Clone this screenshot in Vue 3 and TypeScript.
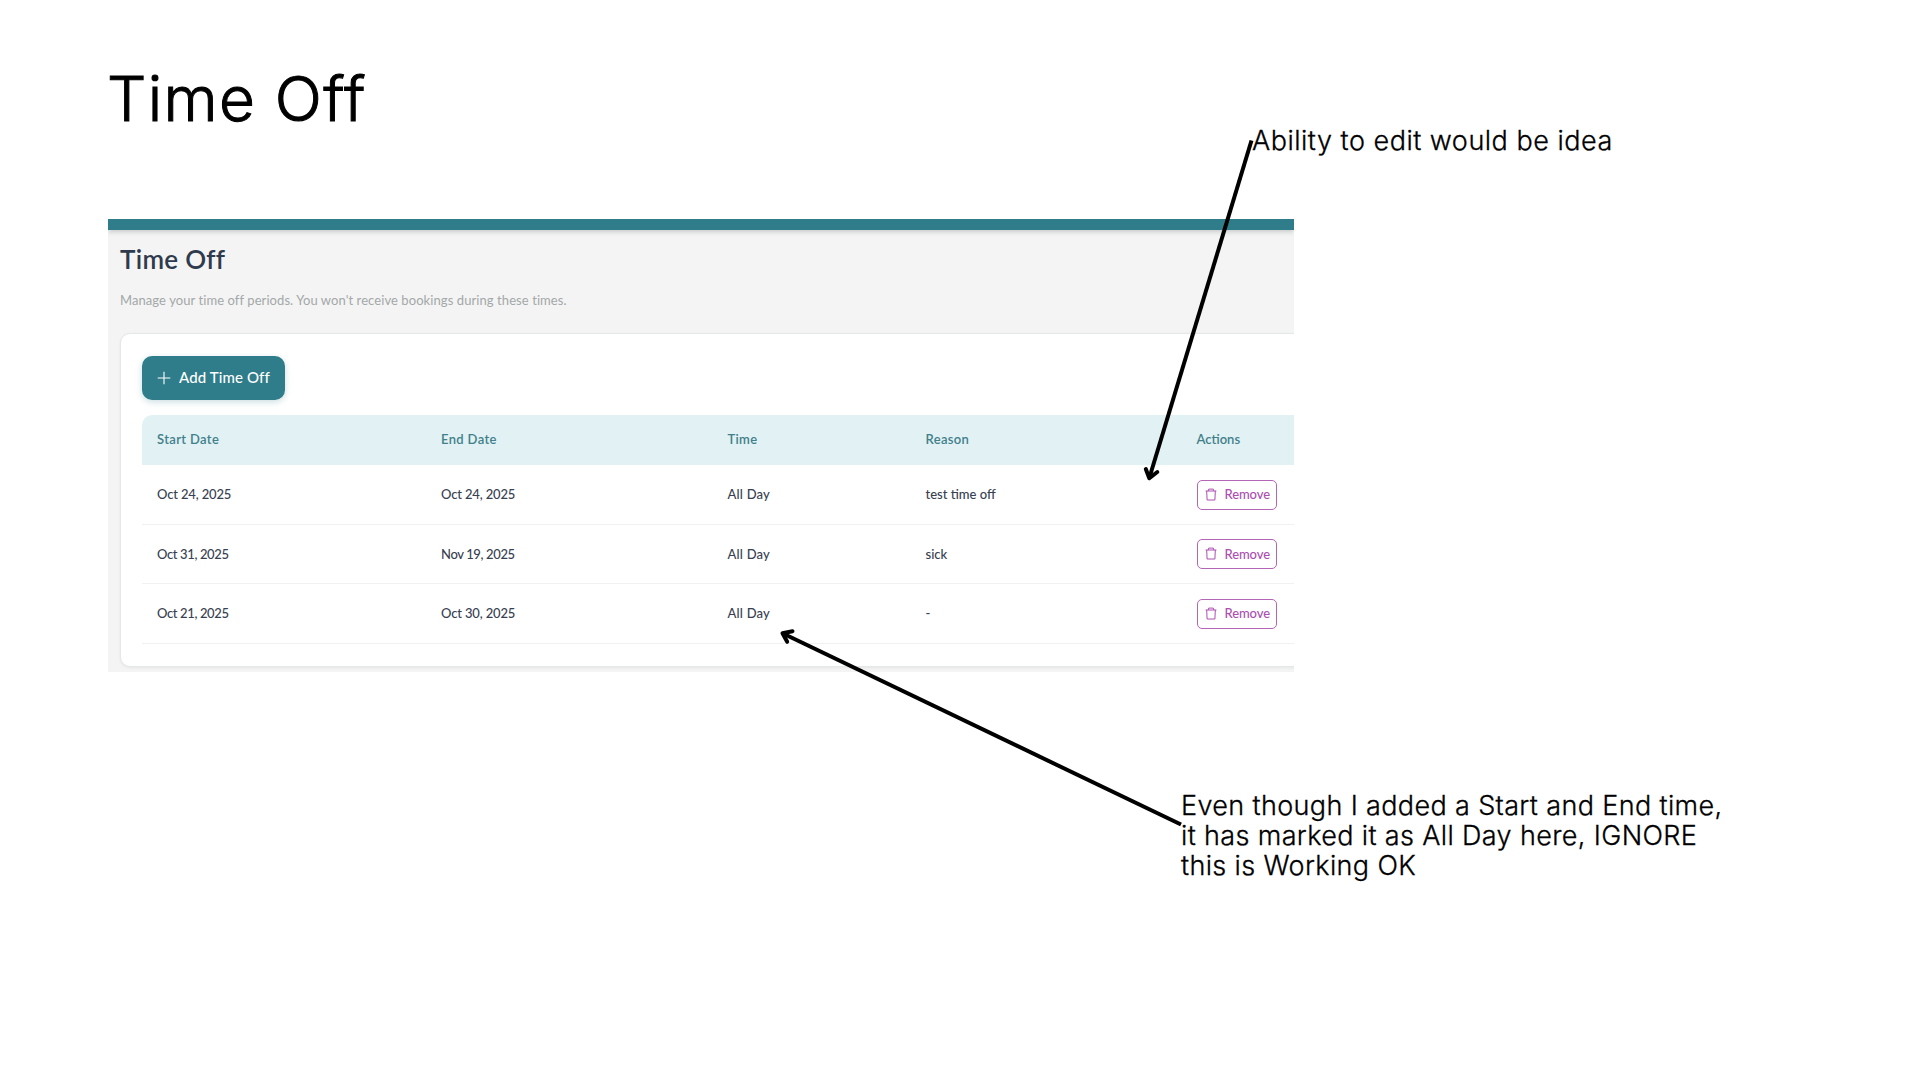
<script setup lang="ts">
interface TimeOff {
  start: string
  end: string
  time: string
  reason: string
}

const rows: TimeOff[] = [
  { start: 'Oct 24, 2025', end: 'Oct 24, 2025', time: 'All Day', reason: 'test time off' },
  { start: 'Oct 31, 2025', end: 'Nov 19, 2025', time: 'All Day', reason: 'sick' },
  { start: 'Oct 21, 2025', end: 'Oct 30, 2025', time: 'All Day', reason: '-' },
]

const hasNarrowOne = (date: string): boolean => /1,|19/.test(date)
</script>

<template>
  <main class="slide">
    <h1 class="title">Time Off</h1>

    <section class="panel">
      <div class="topbar"></div>
      <h2 class="heading">Time Off</h2>
      <p class="subtitle">Manage your time off periods. You won't receive bookings during these times.</p>

      <div class="card">
        <button class="add">
          <svg width="14" height="14" viewBox="0 0 14 14" fill="none" stroke="currentColor" stroke-width="1.1">
            <path d="M7 .7v12.6M.7 7h12.6" />
          </svg>
          <span>Add Time Off</span>
        </button>

        <div class="table">
          <div class="row head">
            <span>Start Date</span>
            <span>End Date</span>
            <span>Time</span>
            <span>Reason</span>
            <span class="actions">Actions</span>
          </div>
          <div v-for="row in rows" :key="row.start" class="row">
            <span class="date" :class="{ tight: hasNarrowOne(row.start) }">{{ row.start }}</span>
            <span class="date" :class="{ tight: hasNarrowOne(row.end) }">{{ row.end }}</span>
            <span class="time">{{ row.time }}</span>
            <span>{{ row.reason }}</span>
            <span>
              <button class="remove">
                <svg width="12" height="13" viewBox="0 0 12 13" fill="none" stroke="currentColor" stroke-width="1">
                  <path d="M.6 3h10.800M3.200 3l.5-1.900h4.600L8.800 3M1.700 3l.4 9h7.800l.4-9" />
                </svg>
                <span>Remove</span>
              </button>
            </span>
          </div>
        </div>
      </div>
    </section>

    <p class="note note-edit">Ability to edit would be idea</p>
    <p class="note note-time">
      Even though I added a Start and End time,<br />it has marked it as All Day here, IGNORE<br />this is Working OK
    </p>

    <svg class="arrows" width="1920" height="1080" viewBox="0 0 1920 1080" fill="none" stroke="#000" stroke-width="4">
      <path d="M1251.500 140.500L1149.300 478" />
      <path d="M1145.800 469L1149.300 478.300L1157.300 472" stroke-linecap="round" stroke-linejoin="round" />
      <path d="M1181 824.500L783 633.500" />
      <path d="M792.500 631.200L782.500 633.200L787.200 641.800" stroke-linecap="round" stroke-linejoin="round" />
    </svg>
  </main>
</template>

<style>
body {
  margin: 0;
  background: #fff;
}
</style>

<style scoped>
.slide {
  position: relative;
  box-sizing: border-box;
  width: 1920px;
  height: 1080px;
  padding: 61px 0 0 108px;
  overflow: hidden;
  background: #fff;
  color: #000;
  font-family: Inter, sans-serif;
}

.title {
  margin: 0 0 83px -1px;
  font-size: 62px;
  font-weight: 300;
  line-height: 75px;
  letter-spacing: 1.3px;
  -webkit-text-stroke: 1px #000;
}

.panel {
  box-sizing: border-box;
  width: 1186px;
  height: 453px;
  overflow: hidden;
  background: #f4f4f4;
  color: #374151;
  font-family: Lato, sans-serif;
}

.topbar {
  height: 11px;
  background: #2f7d8a;
  box-shadow: 0 2px 5px rgba(47, 60, 60, 0.22);
}

.heading {
  margin: 12px 0 0 12px;
  color: #2f3a4c;
  font-size: 26px;
  font-weight: 600;
  line-height: 34px;
  letter-spacing: 0.3px;
}

.subtitle {
  margin: 14px 0 0 12px;
  color: #a3a8a8;
  font-size: 13px;
  line-height: 20px;
  letter-spacing: 0.08px;
}

.card {
  box-sizing: border-box;
  width: 1240px;
  height: 334px;
  margin: 23px 0 0 12px;
  padding: 22px 0 0 21px;
  border: 1px solid #e5e8e8;
  border-radius: 10px;
  background: #fff;
  box-shadow: 0 1px 3px rgba(0, 0, 0, 0.06);
}

.add {
  display: flex;
  align-items: center;
  gap: 8px;
  width: 143px;
  height: 44px;
  padding: 0 0 0 15px;
  border: 0;
  border-radius: 10px;
  background: #2f7d8a;
  box-shadow: 0 2px 6px rgba(47, 125, 138, 0.25);
  color: #fff;
  font: 500 15px/20px Lato, sans-serif;
  letter-spacing: 0.12px;
  white-space: nowrap;
}

.add span {
  margin-top: -3px;
}

.table {
  width: 1210px;
  margin-top: 15px;
}

.row {
  display: grid;
  grid-template-columns: 284px 286.500px 198px 271px 1fr;
  align-items: center;
  box-sizing: border-box;
  height: 59.500px;
  padding-left: 15px;
  border-bottom: 1px solid #f0f1f1;
  font-size: 13px;
  font-weight: 500;
  line-height: 18px;
}

.head {
  height: 50px;
  padding-bottom: 3px;
  border: 0;
  border-radius: 10px 0 0 0;
  background: #e2f1f4;
  color: #41808a;
  font-weight: 600;
  letter-spacing: 0.35px;
}

.actions {
  letter-spacing: 0;
}

.date {
  letter-spacing: -0.15px;
}

.date.tight {
  letter-spacing: -0.37px;
}

.time {
  letter-spacing: 0.2px;
}

.remove {
  display: flex;
  align-items: center;
  gap: 8px;
  box-sizing: border-box;
  width: 80px;
  height: 30px;
  margin-top: 1px;
  padding: 0 0 1px 7px;
  border: 1px solid #b565b5;
  border-radius: 5px;
  background: #fff;
  color: #ac4fb0;
  font: 500 13px/18px Lato, sans-serif;
  letter-spacing: -0.1px;
}

.note {
  position: absolute;
  margin: 0;
  font-size: 27px;
  font-weight: 300;
  line-height: 30px;
  letter-spacing: 0.36px;
  white-space: nowrap;
  -webkit-text-stroke: 0.3px #000;
}

.note-edit {
  left: 1252px;
  top: 126px;
  letter-spacing: 0.5px;
}

.note-time {
  left: 1181px;
  top: 791px;
}

.arrows {
  position: absolute;
  inset: 0;
}
</style>
